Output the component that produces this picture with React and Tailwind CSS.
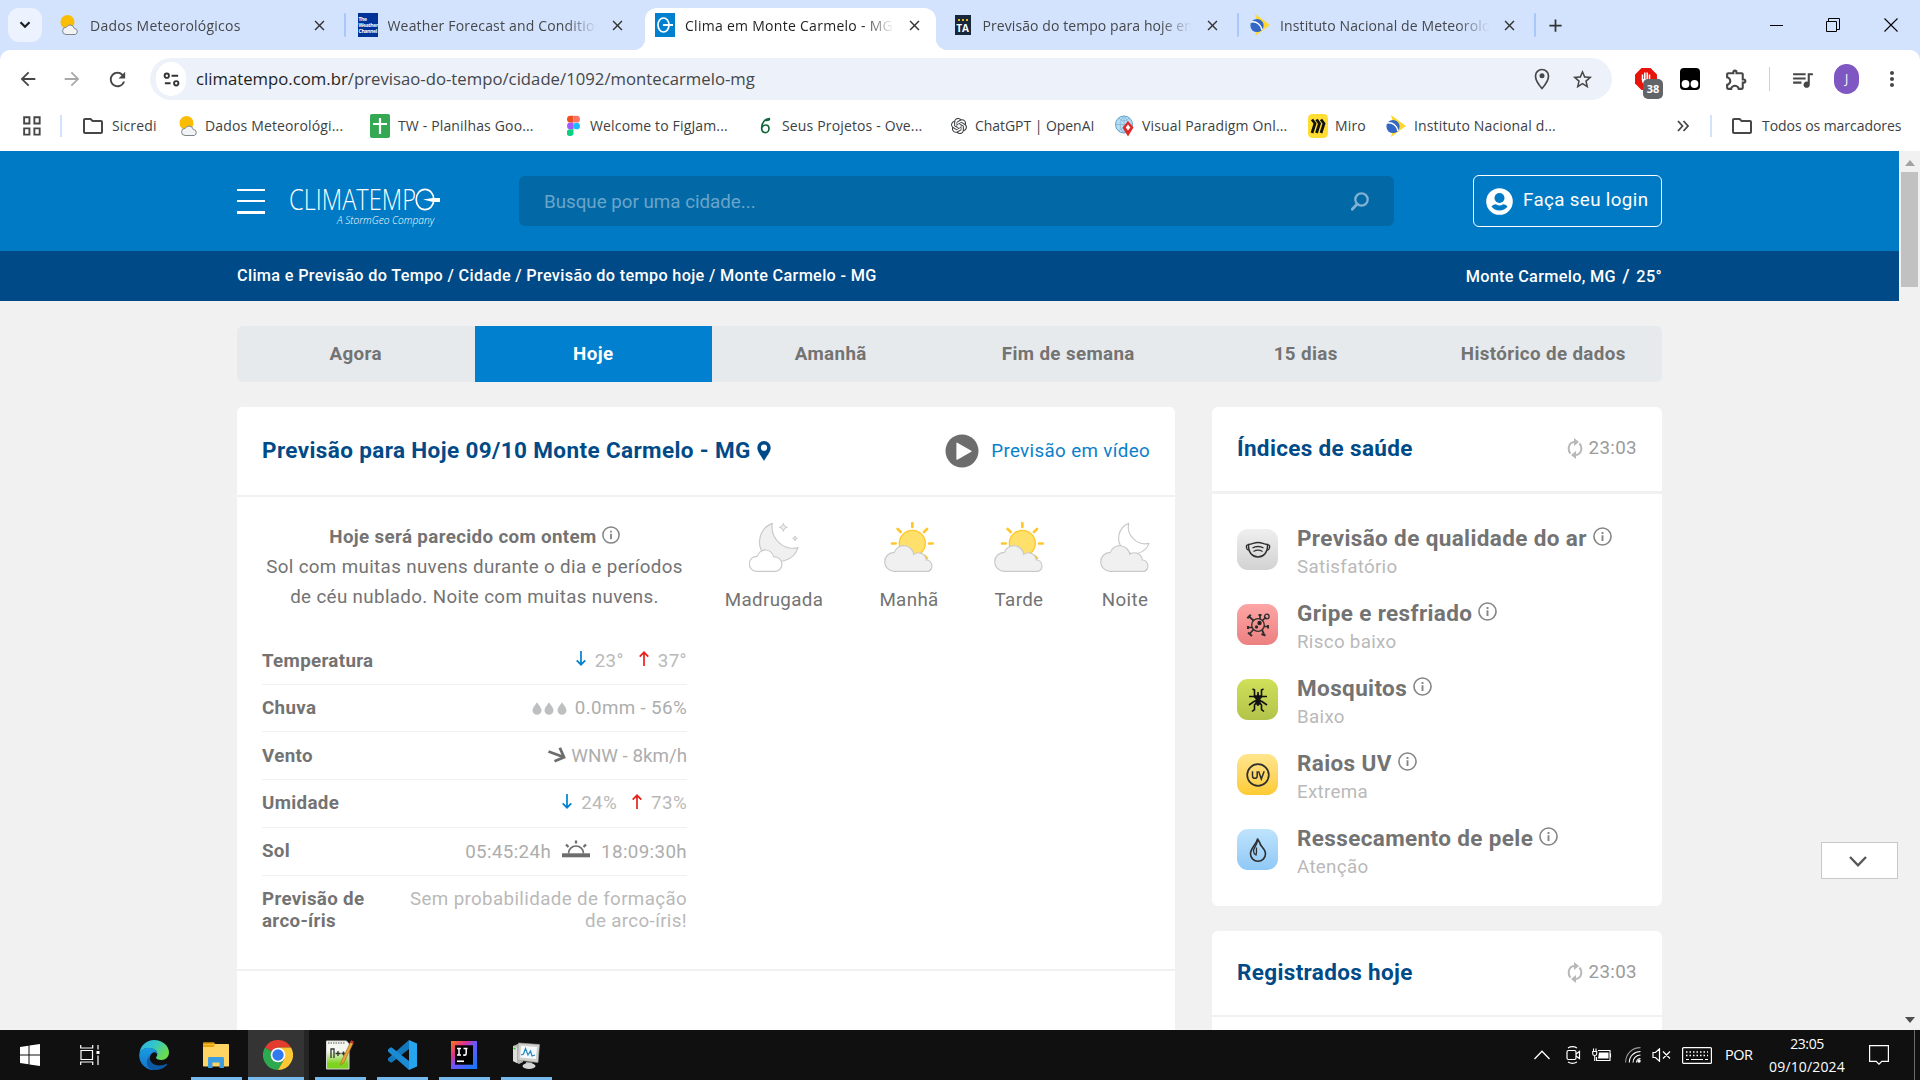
import React from "react";
import {
  MdArrowBack, MdArrowForward, MdRefresh, MdStarOutline, MdOutlineExtension, MdQueueMusic,
  MdMoreVert, MdClose, MdOutlineFolder, MdAdd,
} from "react-icons/md";
import { SiOpenai } from "react-icons/si";

/* ---------- favicons ---------- */

const SunCloud = () => (
  <svg viewBox="0 0 20 22" className="h-[22px] w-[20px]">
    <circle cx="7.500" cy="8" r="7" fill="#fbbc04" />
    <path d="M6 20.500a3.600 3.600 0 0 1 .3-7.200A4.300 4.300 0 0 1 14.300 14.500a3.100 3.100 0 0 1 1 6z" fill="#f1f3f4" stroke="#80868b" strokeWidth="1" />
  </svg>
);

const WeatherChannel = () => (
  <div className="flex h-[24px] w-[20px] flex-col justify-center overflow-hidden bg-[#003399] pl-px font-['Open_Sans',sans-serif] text-[5px] leading-[6px] font-bold tracking-[-0.300px] text-white">
    <span>The</span>
    <span>Weather</span>
    <span>Channel</span>
  </div>
);

const Climatempo = () => (
  <svg viewBox="0 0 20 24" className="h-[24px] w-[20px]">
    <rect width="20" height="24" fill="#0080cf" />
    <ellipse cx="8.500" cy="12" rx="5.500" ry="7" fill="none" stroke="#fff" strokeWidth="1.700" />
    <path d="M8 12h10" stroke="#fff" strokeWidth="2" />
  </svg>
);

const TempoAgora = () => (
  <div className="relative flex h-[20px] w-[16px] items-end justify-center bg-[#16283a] font-['Open_Sans',sans-serif] text-[10px] leading-[13px] font-bold text-white">
    <span>TA</span>
    <div className="absolute top-[3px] left-[3px] h-[3px] w-[10px] border-b-2 border-dotted border-[#e8b420]" />
  </div>
);

const Inmet = () => (
  <svg viewBox="0 0 20 22" className="h-[22px] w-[20px]">
    <path d="M5 0l15 11L5 22l3-11z" fill="#fdd82f" />
    <circle cx="7" cy="11.500" r="6.600" fill="#3567c4" />
    <path d="M1 8c6-1 10 3 11 8" fill="none" stroke="#fff" strokeWidth="1.500" />
  </svg>
);

const Sheets = () => (
  <svg viewBox="0 0 20 24" className="h-[24px] w-[20px]">
    <rect width="20" height="24" rx="2" fill="#34a853" />
    <path d="M10 4v16M3 10h14" stroke="#fff" strokeWidth="2.200" />
  </svg>
);

const Figma = () => (
  <svg viewBox="0 0 14 22" className="h-[22px] w-[13px]">
    <path d="M3.700 0H7v7.300H3.700a3.650 3.650 0 0 1 0-7.300z" fill="#f24e1e" />
    <path d="M7 0h3.300a3.650 3.650 0 0 1 0 7.300H7z" fill="#ff7262" />
    <path d="M3.700 7.300H7v7.300H3.700a3.650 3.650 0 0 1 0-7.300z" fill="#a259ff" />
    <circle cx="10.400" cy="11" r="3.600" fill="#1abcfe" />
    <path d="M3.700 14.600H7v3.700a3.650 3.650 0 1 1-3.300-3.700z" fill="#0acf83" />
  </svg>
);

const Overleaf = () => (
  <svg viewBox="0 0 12 18" className="h-[17px] w-[11px]">
    <path d="M11 1.500C6 1 1.800 5.500 1.800 11.500c0 3.300 1.800 5.300 4 5.300S9.800 15 9.800 12.500 8.200 8.500 6 8.500c-1.700 0-3 1-3.800 2.500M4.500 3c2 1 4.500.3 6.500-.8" fill="none" stroke="#13673a" strokeWidth="1.800" />
  </svg>
);

const VisualParadigm = () => (
  <svg viewBox="0 0 20 22" className="h-[22px] w-[20px]">
    <circle cx="9" cy="9.500" r="8.500" fill="#b8dcf0" stroke="#5ba3cf" />
    <path d="M9 1v17M1 9.500h16M4 3.500c3 3 7 3 10 0M4 15.500c3-3 7-3 10 0M9 1c-5 5-5 12 0 17M9 1c5 5 5 12 0 17" fill="none" stroke="#7fb8dc" strokeWidth=".8" />
    <path d="M13 6l5.500 6.500-5.500 9-5.500-9z" fill="#e02b2b" />
    <path d="M13 9.500l2.300 3-2.300 3-2.200-3z" fill="#fff" />
  </svg>
);

const Miro = () => (
  <svg viewBox="0 0 20 24" className="h-[24px] w-[20px]">
    <rect width="20" height="24" rx="4.500" fill="#ffdd33" />
    <path d="M4 5.500l3 4-3 9.500M8.500 5.500l3 4-3 9.500M13 5.500l3 4-3 9.500" fill="none" stroke="#111" strokeWidth="2.800" />
  </svg>
);

/* ---------- browser chrome ---------- */

const fade = "[mask-image:linear-gradient(to_right,black_85%,transparent)]";

const tabs = [
  { icon: <SunCloud />, title: "Dados Meteorológicos", sep: true, text: "tracking-[0.230px]" },
  { icon: <WeatherChannel />, title: "Weather Forecast and Conditions", text: "tracking-[0.180px]" },
  { icon: <Climatempo />, title: "Clima em Monte Carmelo - MG", active: true, text: "tracking-[0.280px]" },
  { icon: <TempoAgora />, title: "Previsão do tempo para hoje em", sep: true, text: "tracking-[0.080px]" },
  { icon: <Inmet />, title: "Instituto Nacional de Meteorologia", sep: true, text: "tracking-[0.120px]" },
];

function Tab({ icon, title, active, sep, text }) {
  return (
    <div className={"relative flex h-[50px] w-[297.5px] shrink-0 items-center " + (active ? "text-[#1f1f1f]" : "text-[#45474a]")}>
      {active && (
        <>
          <div className="absolute top-[8px] -left-[3px] h-[42px] w-[291px] rounded-t-[12px] bg-white" />
          <div className="absolute bottom-0 -left-[15px] h-[12px] w-[12px] bg-[radial-gradient(circle_at_0_0,#d3e3fd_12px,white_12.500px)]" />
          <div className="absolute bottom-0 left-[288px] h-[12px] w-[12px] bg-[radial-gradient(circle_at_100%_0,#d3e3fd_12px,white_12.500px)]" />
        </>
      )}
      <div className="relative ml-[7px] flex w-[20px] justify-center">{icon}</div>
      <div className={"relative ml-[10px] w-[209px] overflow-hidden text-[14px] whitespace-nowrap " + text + " " + fade}>{title}</div>
      <MdClose className="relative ml-[12px] h-[17px] w-[17px] text-[#333]" />
      {sep && <div className="absolute left-[291px] h-[24px] w-[2px] rounded bg-[#a8c7fa]" />}
    </div>
  );
}

const bookmarks = [
  { icon: <MdOutlineFolder className="-ml-[2px] h-[24px] w-[24px] text-[#474747]" />, label: "Sicredi", w: "w-[96px]", s: "w-[29px]" },
  { icon: <SunCloud />, label: "Dados Meteorológi...", w: "w-[191px]", s: "w-[26px]" },
  { icon: <Sheets />, label: "TW - Planilhas Goo...", w: "w-[197px]", s: "w-[28px]" },
  { icon: <Figma />, label: "Welcome to FigJam...", w: "w-[193px]", s: "w-[23px]" },
  { icon: <Overleaf />, label: "Seus Projetos - Ove...", w: "w-[191px]", s: "w-[22px]" },
  { icon: <SiOpenai className="h-[16px] w-[16px]" />, label: "ChatGPT | OpenAI", w: "w-[164px]", s: "w-[24px]", t: "tracking-[-0.050px]" },
  { icon: <VisualParadigm />, label: "Visual Paradigm Onl...", w: "w-[193px]", s: "w-[27px]" },
  { icon: <Miro />, label: "Miro", w: "w-[78px]", s: "w-[27px]" },
  { icon: <Inmet />, label: "Instituto Nacional d...", w: "w-[200px]", s: "w-[28px]" },
];

function Browser() {
  return (
    <div className="shrink-0 bg-[#d3e3fd] font-['Open_Sans','Noto_Sans',sans-serif] text-[14px] text-[#3c3f43]">
      <div className="flex h-[50px] items-center">
        <div className="mr-[11px] ml-[8px] flex h-[34px] w-[34px] shrink-0 items-center justify-center rounded-[11px] bg-[#ecf2fe]">
          <svg viewBox="0 0 12 8" className="h-[8px] w-[12px]"><path d="M1.500 1.200L6 5.800l4.500-4.600" fill="none" stroke="#1f1f1f" strokeWidth="2.200" /></svg>
        </div>
        {tabs.map((t) => <Tab key={t.title} {...t} />)}
        <MdAdd className="ml-[4px] h-[21px] w-[21px] text-[#333]" />
        <div className="ml-auto flex items-center">
          <div className="mr-[43px] h-px w-[13px] bg-black" />
          <svg viewBox="0 0 14 14" className="mr-[44px] h-[14px] w-[14px]"><path d="M.5 3.500h10v10H.5zM2.500 3.500v-3h11v11h-3" fill="none" stroke="#000" /></svg>
          <svg viewBox="0 0 14 14" className="mr-[22px] h-[14px] w-[14px]"><path d="M.5.5l13 13M13.500.5l-13 13" stroke="#000" strokeWidth="1.100" /></svg>
        </div>
      </div>

      <div className="h-[101px] rounded-t-[10px] bg-white">
        <div className="flex h-[58px] items-center">
          <MdArrowBack className="ml-[17px] h-[22px] w-[22px] text-[#474747]" />
          <MdArrowForward className="ml-[22px] h-[22px] w-[22px] text-[#a9a9a9]" />
          <MdRefresh className="ml-[23px] h-[23px] w-[23px] text-[#474747]" />
          <div className="ml-[21px] flex h-[42px] w-[1462px] items-center rounded-full bg-[#ecf1fa]">
            <div className="ml-[6px] flex h-[34px] w-[30px] items-center justify-center rounded-full bg-white">
              <svg viewBox="0 0 18 18" className="h-[17px] w-[17px]" fill="none" stroke="#333" strokeWidth="2"><circle cx="4" cy="5" r="2.300" /><path d="M9 5h7M2 13h6" /><circle cx="14" cy="13" r="2.300" /></svg>
            </div>
            <div className="ml-[10px] text-[16.700px] tracking-[0.020px] whitespace-nowrap text-[#45474a]">
              <span className="text-[#1f1f1f]">climatempo.com.br</span>/previsao-do-tempo/cidade/1092/montecarmelo-mg
            </div>
            <svg viewBox="0 0 16 22" className="ml-auto h-[22px] w-[16px]"><path d="M8 20.500C4 16 1.500 12 1.500 8a6.500 6.500 0 0 1 13 0c0 4-2.500 8-6.500 12.500z" fill="none" stroke="#474747" strokeWidth="1.700" /><circle cx="8" cy="7.800" r="2.500" fill="#474747" /></svg>
            <MdStarOutline className="mr-[18px] ml-[21px] h-[23px] w-[23px] text-[#474747]" />
          </div>
          <div className="relative ml-[23px] h-[22px] w-[22px]">
            <svg viewBox="0 0 22 22" className="h-[22px] w-[22px]"><path d="M6.500 0h9L22 6.500v9L15.500 22h-9L0 15.500v-9z" fill="#e8140c" /><path d="M7.500 12V6.500M9.800 11V4.500M12.200 11V4.500M14.500 12V6.500" stroke="#fff" strokeWidth="1.500" /><path d="M6.800 11h8.500c0 4-2 6-4.300 6s-4.200-2-4.200-6z" fill="#fff" /></svg>
            <div className="absolute top-[11px] left-[8px] flex h-[20px] w-[20px] items-center justify-center rounded-[5px] bg-[#616468] text-[11px] font-bold text-white">38</div>
          </div>
          <svg viewBox="0 0 20 22" className="ml-[23px] h-[22px] w-[20px]"><rect width="20" height="22" rx="4" fill="#000" /><circle cx="5.500" cy="16" r="3.900" fill="#fff" /><circle cx="14.500" cy="16" r="3.900" fill="#fff" /></svg>
          <MdOutlineExtension className="ml-[24px] h-[25px] w-[25px] text-[#474747]" />
          <div className="ml-[20px] h-[24px] w-px bg-[#bcd3fa]" />
          <MdQueueMusic className="ml-[20px] h-[25px] w-[25px] text-[#474747]" />
          <div className="ml-[19px] flex h-[30px] w-[25px] items-center justify-center rounded-full bg-[#7e57c2] text-[12px] text-white">J</div>
          <MdMoreVert className="ml-[21px] h-[24px] w-[24px] text-[#474747]" />
        </div>
        <div className="flex h-[35px] items-center tracking-[0.150px]">
          <svg viewBox="0 0 19 21" className="ml-[23px] h-[20px] w-[18px] shrink-0" fill="none" stroke="#474747" strokeWidth="2"><path d="M1.200 1.200h5.600v6.600H1.200zM12 1.200h5.600v6.600H12zM1.200 13h5.600v6.600H1.200zM12 13h5.600v6.600H12z" /></svg>
          <div className="mr-[21px] ml-[19px] h-[22px] w-[2px] bg-[#d3e3fd]" />
          {bookmarks.map((b) => (
            <div key={b.label} className={"flex shrink-0 items-center whitespace-nowrap " + b.w}>
              <div className={"flex shrink-0 items-center " + b.s}>{b.icon}</div>
              <span className={b.t || ""}>{b.label}</span>
            </div>
          ))}
          <svg viewBox="0 0 12 12" className="ml-[91px] h-[12px] w-[12px] shrink-0" fill="none" stroke="#474747" strokeWidth="1.800"><path d="M1 1l4.500 5L1 11M6.500 1L11 6l-4.500 5" /></svg>
          <div className="ml-[21px] h-[22px] w-[2px] bg-[#d3e3fd]" />
          <MdOutlineFolder className="ml-[18px] h-[24px] w-[24px] shrink-0 text-[#474747]" />
          <span className="ml-[8px] tracking-[-0.050px] whitespace-nowrap">Todos os marcadores</span>
        </div>
      </div>
    </div>
  );
}

/* ---------- site header ---------- */

function SiteHeader() {
  return (
    <>
      <div className="flex h-[100px] shrink-0 items-center bg-[#007ac4] pl-[237px]">
        <div className="flex h-[25px] w-[28px] flex-col justify-between">
          <div className="h-[2px] bg-white" />
          <div className="h-[2px] bg-white" />
          <div className="h-[3px] bg-white" />
        </div>
        <svg viewBox="0 0 152 56" className="ml-[24px] h-[56px] w-[152px]" fill="#fff">
          <text x="0" y="37" fontFamily="Open Sans, sans-serif" fontSize="29.500" textLength="127" lengthAdjust="spacingAndGlyphs" fontWeight="300">CLIMATEMP</text>
          <ellipse cx="136" cy="26.500" rx="8.800" ry="10.200" fill="none" stroke="#fff" strokeWidth="1.700" />
          <path d="M134 26.500l10-1.500h7v4h-7z" />
          <text x="48" y="51" fontFamily="Open Sans, sans-serif" fontStyle="italic" fontWeight="300" fontSize="10.500" textLength="97" lengthAdjust="spacingAndGlyphs">A StormGeo Company</text>
        </svg>
        <div className="ml-[78px] flex h-[50px] w-[875px] items-center rounded-[6px] bg-[#0369a6] text-[18.750px] text-[#68a5ca]">
          <span className="mt-[2px] ml-[25px]">Busque por uma cidade...</span>
          <svg viewBox="0 0 18 19" className="mr-[25px] ml-auto h-[19px] w-[18px]" fill="none" stroke="#7fb2d3" strokeWidth="2.300"><circle cx="10.500" cy="7.500" r="6.200" /><path d="M6.200 12L1.200 17.200" strokeWidth="2.800" strokeLinecap="round" /></svg>
        </div>
        <div className="ml-[79px] flex h-[52px] w-[189px] items-center rounded-[6px] border border-white">
          <svg viewBox="0 0 27 27" className="ml-[12px] h-[27px] w-[27px]"><circle cx="13.500" cy="13.500" r="13.300" fill="#fff" /><circle cx="13.500" cy="10" r="5" fill="#007ac4" /><path d="M5.500 18.500c1.200-1.600 3-2.300 4.500-2.300 2 1.600 5 1.600 7 0 1.500 0 3.300.7 4.500 2.300-3.500 5.400-12.500 5.400-16 0z" fill="#007ac4" /></svg>
          <span className="mb-[2px] ml-[10px] text-[18.750px] tracking-[0.370px] whitespace-nowrap text-white">Faça seu login</span>
        </div>
      </div>
      <div className="flex h-[50px] shrink-0 items-center justify-between bg-[#004a87] pr-[237px] pl-[237px] text-[16.250px] font-medium tracking-[0.320px] text-white">
        <span className="pt-px">Clima e Previsão do Tempo / Cidade / Previsão do tempo hoje / Monte Carmelo - MG</span>
        <span>Monte Carmelo, MG <span className="mx-[2px] text-[18.750px]">/</span> 25°</span>
      </div>
    </>
  );
}

/* ---------- weather drawings ---------- */

const wideCloud = "M30 148A28 28 0 0 1 31 91A30 30 0 0 1 89 97A24 24 0 0 1 127 114A17.500 17.500 0 0 1 132 148Z";

const NightStars = () => (
  <svg viewBox="0 0 150 150" className="h-[50px] w-[50px]" fill="#f0f0f0" stroke="#c9c9c9" strokeWidth="3.500" strokeLinejoin="round">
    <path d="M70 4A59 59 0 1 0 147 77A64 64 0 0 1 70 4Z" />
    <path d="M22 148A22 22 0 0 1 25 103A25 25 0 0 1 74 105A21.500 21.500 0 0 1 80 148Z" fill="#fff" />
    <path d="M103 4l3.500 8.500L115 16l-8.500 3.500L103 28l-3.500-8.500L91 16l8.500-3.500zM138 42l2 5 5 2-5 2-2 5-2-5-5-2 5-2z" strokeWidth="3" />
  </svg>
);

const SunnyCloud = () => (
  <svg viewBox="0 0 150 150" className="h-[50px] w-[50px]">
    <circle cx="85" cy="64" r="39" fill="#ffe06b" stroke="#ffc72c" strokeWidth="4" />
    <path d="M85 3v12M24 64.500h11M135 64.500h11M41 21l9 9M120 30l9-9M122 102l7 7" stroke="#ffc72c" strokeWidth="8" strokeLinecap="round" />
    <path d={wideCloud} fill="#f0f0f0" stroke="#c9c9c9" strokeWidth="3.500" />
  </svg>
);

const NightCloud = () => (
  <svg viewBox="0 0 150 150" className="h-[50px] w-[50px]" fill="#f0f0f0" stroke="#c9c9c9" strokeWidth="3.500" strokeLinejoin="round">
    <path d="M86 4A47 47 0 1 0 147 64A51 51 0 0 1 86 4Z" fill="#fff" />
    <path d={wideCloud} />
  </svg>
);

const Info = ({ className }) => (
  <svg viewBox="0 0 20 20" className={className} fill="none" stroke="#858585">
    <circle cx="10" cy="10" r="9" strokeWidth="1.700" />
    <path d="M10 8.700v6M10 5.300v2" strokeWidth="2" />
  </svg>
);

const Down = () => (
  <svg viewBox="0 0 10 15" className="mb-[5px] h-[15px] w-[10px]" fill="none" stroke="#0080cf" strokeWidth="1.700"><path d="M5 0v14M.7 9.300L5 13.700l4.300-4.400" /></svg>
);
const Up = () => (
  <svg viewBox="0 0 10 15" className="mb-[5px] h-[15px] w-[10px]" fill="none" stroke="#e8211c" strokeWidth="1.700"><path d="M5 15V1M.7 5.700L5 1.300l4.300 4.400" /></svg>
);
const Drop = () => (
  <svg viewBox="0 0 10 13" className="mt-px h-[13px] w-[10px]"><path d="M5 .3C6.500 3 9.500 5.500 9.500 8.300a4.500 4.500 0 0 1-9 0C.5 5.500 3.500 3 5 .3z" fill="#bdbfc1" /></svg>
);

const rows = [
  { label: "Temperatura", h: "h-[48px] pt-px", value: <><Down /><span className="mr-[15px] ml-[9px]">23°</span><Up /><span className="ml-[9px]">37°</span></> },
  { label: "Chuva", h: "h-[47px]", value: <><div className="mr-[8px] flex gap-[2.500px]"><Drop /><Drop /><Drop /></div><span className="text-[#adadad]">0.0mm - 56%</span></> },
  {
    label: "Vento", h: "h-[48px] pt-px",
    value: <><svg viewBox="0 0 18 16" className="mr-[5px] mb-[3px] h-[16px] w-[18px]" fill="none" stroke="#6d6d6d" strokeWidth="2.800"><path d="M.5 4.500l15 5.500M11.800 .8L16 10.300l-9.500 3.900" /></svg><span className="tracking-[0px] text-[#adadad]">WNW - 8km/h</span></>,
  },
  { label: "Umidade", h: "h-[48px]", value: <><Down /><span className="mr-[15px] ml-[9px]">24%</span><Up /><span className="ml-[9px]">73%</span></> },
  {
    label: "Sol", h: "h-[48px]",
    value: <><span className="pt-px text-[#adadad]">05:45:24h</span><svg viewBox="0 0 28 18" className="mr-[11px] mb-[5px] ml-[11px] h-[18px] w-[28px]" fill="none" stroke="#6d6d6d"><path d="M0 15.300h28" strokeWidth="4" /><path d="M6.500 13.500a7.500 7.500 0 0 1 15 0" strokeWidth="1.700" /><path d="M14 .5v3M4 4.500l2.500 2.500M24 4.500L21.500 7" strokeWidth="2.300" /></svg><span className="pt-px text-[#adadad]">18:09:30h</span></>,
  },
];

const periods = [
  { label: "Madrugada", icon: <NightStars />, w: "w-[98px]" },
  { label: "Manhã", icon: <SunnyCloud />, w: "w-[60px] ml-[56px]" },
  { label: "Tarde", icon: <SunnyCloud />, w: "w-[50px] ml-[55px]" },
  { label: "Noite", icon: <NightCloud />, w: "w-[50px] ml-[56px]" },
];

function ForecastCard() {
  return (
    <div className="w-[938px] rounded-t-[6px] bg-white text-[18.750px] tracking-[0.360px] text-[#737373]">
      <div className="flex h-[90px] items-center border-b-2 border-[#f1f1f1] px-[25px]">
        <h1 className="text-[22.500px] font-bold tracking-[0.380px] text-[#004a87]">Previsão para Hoje 09/10 Monte Carmelo - MG</h1>
        <svg viewBox="0 0 14 20" className="ml-[6px] h-[20px] w-[14px]"><path d="M7 20C4.500 15 .3 11 .3 6.700a6.700 6.700 0 0 1 13.400 0C13.700 11 9.500 15 7 20z" fill="#004a87" /><circle cx="7" cy="6.700" r="3.100" fill="#fff" /></svg>
        <svg viewBox="0 0 34 34" className="ml-auto h-[34px] w-[34px]"><circle cx="17" cy="17" r="16.500" fill="#6d6d6d" /><path d="M12 9.200l14 8-14 8z" fill="#fff" stroke="#fff" strokeWidth="1.200" strokeLinejoin="round" /></svg>
        <span className="ml-[12px] text-[#0a80cb]">Previsão em vídeo</span>
      </div>
      <div className="flex h-[474px] border-b-2 border-[#f1f1f1] pl-[25px]">
        <div className="w-[425px]">
          <div className="mt-[25px] text-center leading-[30px]">
            <div className="flex items-center justify-center">
              <span className="font-bold tracking-[0.350px]">Hoje será parecido com ontem</span>
              <Info className="mb-[5px] ml-[5px] h-[18px] w-[18px]" />
            </div>
            <p>Sol com muitas nuvens durante o dia e períodos<br />de céu nublado. Noite com muitas nuvens.</p>
          </div>
          <div className="mt-[25px] text-[#b9b9b9]">
            {rows.map((r) => (
              <div key={r.label} className={"flex items-center justify-between border-b border-[#f0f0f0] " + r.h}>
                <span className="font-bold tracking-[0.330px] text-[#737373]">{r.label}</span>
                <div className="flex items-center">{r.value}</div>
              </div>
            ))}
            <div className="mt-[12px] flex justify-between leading-[22px]">
              <span className="font-bold tracking-[0.330px] text-[#737373]">Previsão de<br />arco-íris</span>
              <span className="text-right">Sem probabilidade de formação<br />de arco-íris!</span>
            </div>
          </div>
        </div>
        <div className="mt-[25px] ml-[38px] flex">
          {periods.map((p) => (
            <div key={p.label} className={"flex flex-col items-center " + p.w}>
              {p.icon}
              <span className="mt-[14px]">{p.label}</span>
            </div>
          ))}
        </div>
      </div>
    </div>
  );
}

/* ---------- health indexes ---------- */

const glyph = { fill: "none", stroke: "#2e2e2e", strokeWidth: 1.3, className: "h-[26px] w-[26px]", viewBox: "0 0 26 26" };

const health = [
  {
    title: "Previsão de qualidade do ar", status: "Satisfatório", bg: "bg-linear-to-b from-[#efefef] to-[#d2d2d2]",
    icon: <svg {...glyph}><path d="M3.500 7.500C8 7 9 5.500 13 5.500s5 1.500 9.500 2c.5 8-4 12.500-9.500 12.500S3 15.500 3.500 7.500z" strokeWidth="1.500" /><path d="M3.500 8C.7 7 .5 12 3.500 13.500M22.500 8c2.800-1 3 4 0 5.500M7.500 11c3-2 8-2 11 0M8.500 14.500c2.500-1.500 6.500-1.500 9 0" /></svg>,
  },
  {
    title: "Gripe e resfriado", status: "Risco baixo", bg: "bg-linear-to-b from-[#fda5a5] to-[#ec8080]",
    icon: <svg {...glyph}><circle cx="13" cy="13" r="6.300" /><path d="M8.500 8.500L4 4.500M17.500 8.500L21 5M8.500 17.500L4.500 22M17 18l2 4M15 7V3M19 14.500h4M7 15.500H3" strokeWidth="1.700" /><circle cx="21.800" cy="4.500" r="2.300" /><path d="M2.300 6.300l3.500-3.500M3 20.500l4 3.500M16.500 22l4 1.500M13.500 3h3M23 13v3.500M3 14v3" strokeWidth="2" /><circle cx="14.500" cy="11" r="1.600" fill="#111" /><circle cx="11.500" cy="15" r="1" fill="#111" /></svg>,
  },
  {
    title: "Mosquitos", status: "Baixo", bg: "bg-linear-to-b from-[#d0e05a] to-[#b2c34a]",
    icon: <svg {...glyph} stroke="#111" strokeWidth="1.600"><path d="M13 5v4M13 10.500L9.500 8.500V3L7.500 2M13 10.500l3.500-2V3l2-1M13 12.500L9 9.500H4M13 12.500l4-3h5M13 13l-4 1.500-5 3.500M13 13l4 1.500 5 3.500M12.500 14l-3 4v4.500L7 24.500M13.500 14l3 4v4.500l2.500 2" /><ellipse cx="13" cy="13" rx="2.500" ry="6" fill="#111" stroke="none" /></svg>,
  },
  {
    title: "Raios UV", status: "Extrema", bg: "bg-linear-to-b from-[#ffe58c] to-[#fecb2e]",
    icon: <svg {...glyph}><circle cx="13" cy="13" r="10.800" strokeWidth="1.700" /><path d="M7.500 9.300v4.700a2.300 2.300 0 0 0 4.700 0V9.300M13.600 9.300L16.300 17l2.900-7.700" strokeWidth="1.500" /></svg>,
  },
  {
    title: "Ressecamento de pele", status: "Atenção", bg: "bg-linear-to-b from-[#bfe3fd] to-[#8fc8f6]",
    icon: <svg {...glyph} strokeWidth="1.600"><path d="M12.500 1.500c0 5-7 9-7 15.300a7.500 7.500 0 0 0 15 0c0-5.300-5-7.300-5.500-10.300C14.500 4.500 13 3.500 12.500 1.500z" /><path d="M12.300 3c.7 5-3.800 7-3.800 11 0 2.500 2.500 4 2.500 4 1-2.500.2-5 .5-7.500" strokeWidth="1.300" /></svg>,
  },
];

function SideTitle({ children, h }) {
  return (
    <div className={"flex items-center justify-between border-[#f1f1f1] px-[25px] " + h}>
      <h2 className="mb-px text-[22.500px] font-bold tracking-[0.340px] text-[#004a87]">{children}</h2>
      <div className="mb-px flex items-center text-[18.750px] tracking-[0.350px] text-[#9b9b9b]">
        <svg viewBox="0 0 16 21" className="mr-[6px] h-[21px] w-[16px]" fill="none" stroke="#b8b8b8" strokeWidth="2">
          <path d="M3.500 15.500C.5 12 1 4.500 7.500 4M12.500 5.500C15.500 9 15 16.500 8.500 17" />
          <path d="M7 0l5 4-5 4zM9 13l-5 4 5 4z" fill="#b8b8b8" stroke="none" />
        </svg>
        23:03
      </div>
    </div>
  );
}

function Sidebar() {
  return (
    <div className="flex w-[450px] flex-col gap-[25px]">
      <div className="h-[499px] rounded-[6px] bg-white">
        <SideTitle h="h-[87px] border-b-3">Índices de saúde</SideTitle>
        <div className="mt-[28px] flex flex-col px-[25px]">
          {health.map((i) => (
            <div key={i.title} className="flex h-[75px]">
              <div className={"mt-[7px] flex h-[41px] w-[41px] items-center justify-center rounded-[11px] " + i.bg}>{i.icon}</div>
              <div className="ml-[19px]">
                <div className="flex items-center text-[22.500px] leading-[32px] font-bold tracking-[0.370px] text-[#737373]">
                  {i.title}<Info className="mb-[3px] ml-[6px] h-[19px] w-[19px]" />
                </div>
                <div className="pt-px text-[18.750px] leading-[24px] tracking-[0.320px] text-[#b9b9b9]">{i.status}</div>
              </div>
            </div>
          ))}
        </div>
      </div>
      <div className="h-[120px] rounded-t-[6px] bg-white">
        <SideTitle h="h-[86px] border-b-2">Registrados hoje</SideTitle>
      </div>
    </div>
  );
}

/* ---------- taskbar ---------- */

function TaskItem({ children, className = "", line = true }) {
  return (
    <div className={"flex h-[50px] shrink-0 flex-col items-center justify-end " + className}>
      <div className="flex flex-1 items-center pt-[3px]">{children}</div>
      <div className={"h-[3px] w-full " + (line ? "bg-[#76b9ed]" : "")} />
    </div>
  );
}

function Taskbar() {
  return (
    <div className="flex h-[50px] shrink-0 bg-[#101010] font-['Open_Sans','Noto_Sans',sans-serif] text-white">
      <TaskItem line={false} className="ml-[20px] w-[20px]">
        <svg viewBox="0 0 20 20" className="h-[22px] w-[20px]" preserveAspectRatio="none" fill="#fff"><path d="M0 2.800l8.500-1.200v7.900H0zM9.500 1.400L20 0v9.500H9.500zM0 10.500h8.500v7.900L0 17.200zM9.500 10.500H20V20L9.500 18.600z" /></svg>
      </TaskItem>
      <TaskItem line={false} className="ml-[40px] w-[20px]">
        <svg viewBox="0 0 20 20" className="h-[20px] w-[20px]" fill="none" stroke="#fff" strokeWidth="1.200"><path d="M1 5.500h11.500v9H1zM.7 0v3h12V0M.7 20v-3h12v3M18 0v4.500M18 10.500V20" /><path d="M16.500 6h3v3h-3z" fill="#fff" stroke="none" /></svg>
      </TaskItem>
      <TaskItem line={false} className="ml-[39px] w-[30px]">
        <svg viewBox="0 0 30 30" className="h-[30px] w-[30px]">
          <defs>
            <linearGradient id="e1" x1="0" y1="0" x2="1" y2=".5"><stop offset="0" stopColor="#2fb0e8" /><stop offset=".5" stopColor="#34c6c8" /><stop offset="1" stopColor="#6bdc4e" /></linearGradient>
            <linearGradient id="e2" x1="0" y1="0" x2="0" y2="1"><stop offset="0" stopColor="#1b9de2" /><stop offset="1" stopColor="#1372c8" /></linearGradient>
          </defs>
          <path d="M.5 13C1.500 5.500 7.500 0 15 0c8.500 0 15 5.800 15 12.500 0 4.500-3.500 7.500-7.500 7.500-3.500 0-5.500-1.300-5.500-2.300 0-.8 1.300-1.200 1.300-3.700 0-3.500-3.800-6-8.300-6C5.500 8 2 10 .5 13z" fill="url(#e1)" />
          <path d="M.3 14C1.500 10 5 7.800 9.500 7.800c5 0 9 3 8.700 6.200-1-1.500-2.700-2-4-1.500-4 1.500-5.500 9.500.5 14.500 1.500 1.200 1 3-.7 3C6 29.500-.5 22.500.3 14z" fill="url(#e2)" />
          <path d="M10.500 17c0 5 4.500 8.500 10 8.500 3 0 5-.8 6.500-1.500 1-.5 1.500 0 1 1C25.500 28 20.500 30 16 30c-6 0-9-5-8-9.500.5-2.500 2.500-5 4-6-1 1-1.500 1.500-1.500 2.500z" fill="#0c59a4" />
        </svg>
      </TaskItem>
      <TaskItem className="ml-[22px] w-[51px]">
        <svg viewBox="0 0 26 26" className="mr-[2px] h-[26px] w-[26px]"><path d="M0 1.500C0 .7.500.3 1 .3h10l1.500 2.500H0z" fill="#d99a07" /><rect y="2" width="26" height="22.500" rx=".8" fill="#ffd463" /><path d="M0 2.500h11.500V4L10 5H0z" fill="#e6a50f" /><path d="M5 26V16.500c0-1 .6-1.500 1.500-1.500h13c.9 0 1.500.5 1.500 1.500V26h-4.500v-5.500h-7V26z" fill="#3e9de0" /></svg>
      </TaskItem>
      <TaskItem className="ml-[6px] w-[61px] border-r-[5px] border-[#252525] bg-[#343434]">
        <svg viewBox="0 0 30 30" className="ml-[4px] h-[30px] w-[30px]">
          <path d="M15 15L2 7.500A15 15 0 0 1 28 7.500H15z" fill="#e33b2e" />
          <path d="M15 15L2 7.500A15 15 0 0 0 15 30l6.500-11.200z" fill="#2da94f" />
          <path d="M15 15l6.500 3.800L15 30A15 15 0 0 0 28 7.500H15z" fill="#fcc934" />
          <circle cx="15" cy="15" r="7.300" fill="#fff" /><circle cx="15" cy="15" r="5.700" fill="#3079ee" />
        </svg>
      </TaskItem>
      <TaskItem className="ml-[6px] w-[51px]">
        <svg viewBox="0 0 28 30" className="mr-[2px] h-[30px] w-[28px]">
          <defs><linearGradient id="n1" x1="0" y1="0" x2="0" y2="1"><stop offset=".35" stopColor="#f4f8f0" /><stop offset=".8" stopColor="#7ed321" /></linearGradient></defs>
          <path d="M.5 1h20l2.500 3v25H.5z" fill="url(#n1)" stroke="#d5d5d5" /><path d="M2 3h17" stroke="#888" strokeDasharray="1.500 1" strokeWidth="1.500" />
          <path d="M5 18V9h3v9M9.500 13.500h5M12 11v5M15.500 13.500h4M17.500 11.500v4" stroke="#333" strokeWidth="1.300" fill="none" />
          <path d="M14.500 25l1-4L24.500 2l2.700 1.200L18 22.500z" fill="#e8a33a" stroke="#a86a1c" strokeWidth=".6" /><path d="M24 2.500l1-2.200 3 1.300-1 2.200z" fill="#c9342d" />
        </svg>
      </TaskItem>
      <TaskItem className="ml-[11px] w-[51px]">
        <svg viewBox="0 0 30 30" className="mr-[2px] h-[30px] w-[30px]">
          <path d="M22 0l8 3.500v23L22 30z" fill="#27a4ee" />
          <path d="M22 0L1 18.500v2l2.500 2h1.300L22 9z" fill="#1377bd" />
          <path d="M22 30L1 11.500v-2l2.500-2h1.300L22 21z" fill="#1b8bd4" />
        </svg>
      </TaskItem>
      <TaskItem className="ml-[11px] w-[51px]">
        <svg viewBox="0 0 26 26" className="mr-[2px] h-[28px] w-[26px]" preserveAspectRatio="none">
          <defs><linearGradient id="i1" x1="0" y1="0" x2="1" y2="1"><stop offset="0" stopColor="#f97a12" /><stop offset=".3" stopColor="#e0318c" /><stop offset=".5" stopColor="#6b57ff" /><stop offset="1" stopColor="#087cfa" /></linearGradient></defs>
          <rect width="26" height="26" fill="url(#i1)" /><rect x="4" y="4" width="18" height="18" fill="#000" />
          <path d="M6 7h4M8 7v6M6 13h4M12.500 7h4M15.200 7v4.500c0 1-.5 1.600-1.500 1.600h-1.500" stroke="#fff" strokeWidth="1.500" fill="none" /><path d="M6 18.800h7" stroke="#fff" strokeWidth="1.500" />
        </svg>
      </TaskItem>
      <TaskItem className="ml-[11px] w-[51px]">
        <svg viewBox="0 0 30 30" className="h-[30px] w-[30px]">
          <path d="M1 6l6-2.500 4 1V22l-4 2-6-3z" fill="#b5b5b2" /><path d="M1 6l4 1.500V23l-4-2z" fill="#dedede" /><path d="M1.500 8l2 1" stroke="#37c637" strokeWidth="1.500" />
          <path d="M6.500 3l21 1.500-1.500 18L5.500 20z" fill="#cfcfcb" stroke="#a5a5a5" strokeWidth=".6" />
          <path d="M9 5.800l16 1.200-1.200 12L8.200 17.500z" fill="#f4fafd" /><path d="M9 15l2.500-1 2-5.500 2.500 6.500 2.500-4 1.500 5 3-1" stroke="#2486bf" strokeWidth="1.200" fill="none" />
          <path d="M14 22l6 .6.500 2.400h-7z" fill="#aaa" /><ellipse cx="17" cy="26" rx="6.500" ry="3" fill="#d6d6d6" />
        </svg>
      </TaskItem>

      <div className="ml-auto flex items-center">
        <svg viewBox="0 0 16 10" className="h-[10px] w-[16px]" fill="none" stroke="#fff" strokeWidth="1.300"><path d="M.5 9L8 1.300 15.500 9" /></svg>
        <svg viewBox="0 0 15 18" className="ml-[16px] h-[18px] w-[15px]" fill="none" stroke="#fff" strokeWidth="1.200"><rect x="1" y="4.500" width="9" height="9" rx="1.500" /><path d="M10 8l3.500-2.500v7L10 10M2 2c3-1.700 6-1.700 9 0M2 16c3 1.700 6 1.700 9 0" /></svg>
        <svg viewBox="0 0 20 14" className="ml-[11px] h-[14px] w-[20px]" fill="none" stroke="#fff" strokeWidth="1.100"><path d="M6 2.500h12v10H4.500V9M18.500 5.500v4" /><path d="M7 4.500h9.500v6H6z" fill="#fff" stroke="none" /><path d="M.7 3.500h4v2.200c0 1-.8 1.800-2 1.800s-2-.8-2-1.800zM1.500 3.500V.5M4 3.500V.5M2.700 7.500V13" /></svg>
        <svg viewBox="0 0 16 16" className="ml-[13px] h-[16px] w-[16px]" fill="none" stroke="#fff" strokeWidth="1.100"><path d="M.6 15.500C.6 7 7 .6 15.500.6" stroke="#999" /><path d="M4.300 15.500c0-6.200 5-11 11.200-11M8 15.500C8 11.400 11.400 8 15.500 8" /><path d="M11.500 15.500a4 4 0 0 1 4-4" /><circle cx="14" cy="14" r="1.700" fill="#fff" stroke="none" /></svg>
        <svg viewBox="0 0 19 14" className="ml-[11px] h-[14px] w-[19px]" fill="none" stroke="#fff" strokeWidth="1.200"><path d="M1 4.500h2.500L7.500.8v12.400L3.500 9.500H1zM11 3.500l7 7M18 3.500l-7 7" /></svg>
        <svg viewBox="0 0 30 17" className="ml-[11px] h-[17px] w-[30px]" fill="none" stroke="#fff" strokeWidth="1.200"><rect x=".6" y=".6" width="28.800" height="15.800" rx="1" /><path d="M4 5h22M4 8.500h22" strokeDasharray="1.500 2" strokeWidth="1.500" /><path d="M4 12.500h3M9 12.500h12M23 12.500h3" /></svg>
        <span className="ml-[13px] w-[28px] text-[14.500px] tracking-[-0.500px]">POR</span>
        <div className="ml-[15px] flex w-[78px] flex-col items-center pb-[1px] text-[14px] leading-[23px] tracking-[0.150px]">
          <span className="tracking-[-0.400px]">23:05</span>
          <span>09/10/2024</span>
        </div>
        <svg viewBox="0 0 20 20" className="ml-[23px] h-[20px] w-[20px]" fill="none" stroke="#fff" strokeWidth="1.200"><path d="M.6.600h18.800v15.800h-6.600L10 19.200l-2.800-2.800H.6z" /></svg>
        <div className="mr-[5px] ml-[25px] h-[50px] w-px bg-[#6a6a6a]" />
      </div>
    </div>
  );
}

/* ---------- page ---------- */

const nav = ["Agora", "Hoje", "Amanhã", "Fim de semana", "15 dias", "Histórico de dados"];

export default function App() {
  return (
    <div className="flex h-[1080px] w-[1920px] flex-col overflow-hidden bg-white">
      <Browser />
      <div className="flex h-[879px] shrink-0 font-['Roboto',sans-serif]">
        <div className="relative flex h-[879px] w-[1899px] flex-col overflow-hidden bg-[#f1f1f1]">
          <SiteHeader />
          <div className="mt-[25px] ml-[237px] flex h-[56px] w-[1425px] shrink-0 overflow-hidden rounded-[6px] bg-[#e6eaed] text-[18.750px] font-bold tracking-[0.380px] text-[#737373]">
            {nav.map((n) => (
              <div key={n} className={"flex flex-1 items-center justify-center " + (n === "Hoje" ? "bg-[#0080cf] text-white" : "")}>{n}</div>
            ))}
          </div>
          <div className="mt-[25px] ml-[237px] flex gap-[37px]">
            <div className="h-[700px] rounded-t-[6px] bg-white"><ForecastCard /></div>
            <Sidebar />
          </div>
          <div className="absolute top-[691px] right-px flex h-[37px] w-[77px] items-center justify-center border border-[#c8c8c8] bg-white">
            <svg viewBox="0 0 18 11" className="mt-px mr-[3px] h-[11px] w-[18px]" fill="none" stroke="#555" strokeWidth="2.300"><path d="M1 1l8 8.300L17 1" /></svg>
          </div>
        </div>
        <div className="flex w-[21px] flex-col items-center bg-[#f1f1f1]">
          <div className="flex h-[21px] items-center"><div className="mt-[2px] border-x-[5px] border-b-[6px] border-x-transparent border-b-[#a3a3a3]" /></div>
          <div className="h-[115px] w-[17px] bg-[#c1c1c1]" />
          <div className="mt-auto flex h-[21px] items-center"><div className="border-x-[5px] border-t-[6px] border-x-transparent border-t-[#505050]" /></div>
        </div>
      </div>
      <Taskbar />
    </div>
  );
}
